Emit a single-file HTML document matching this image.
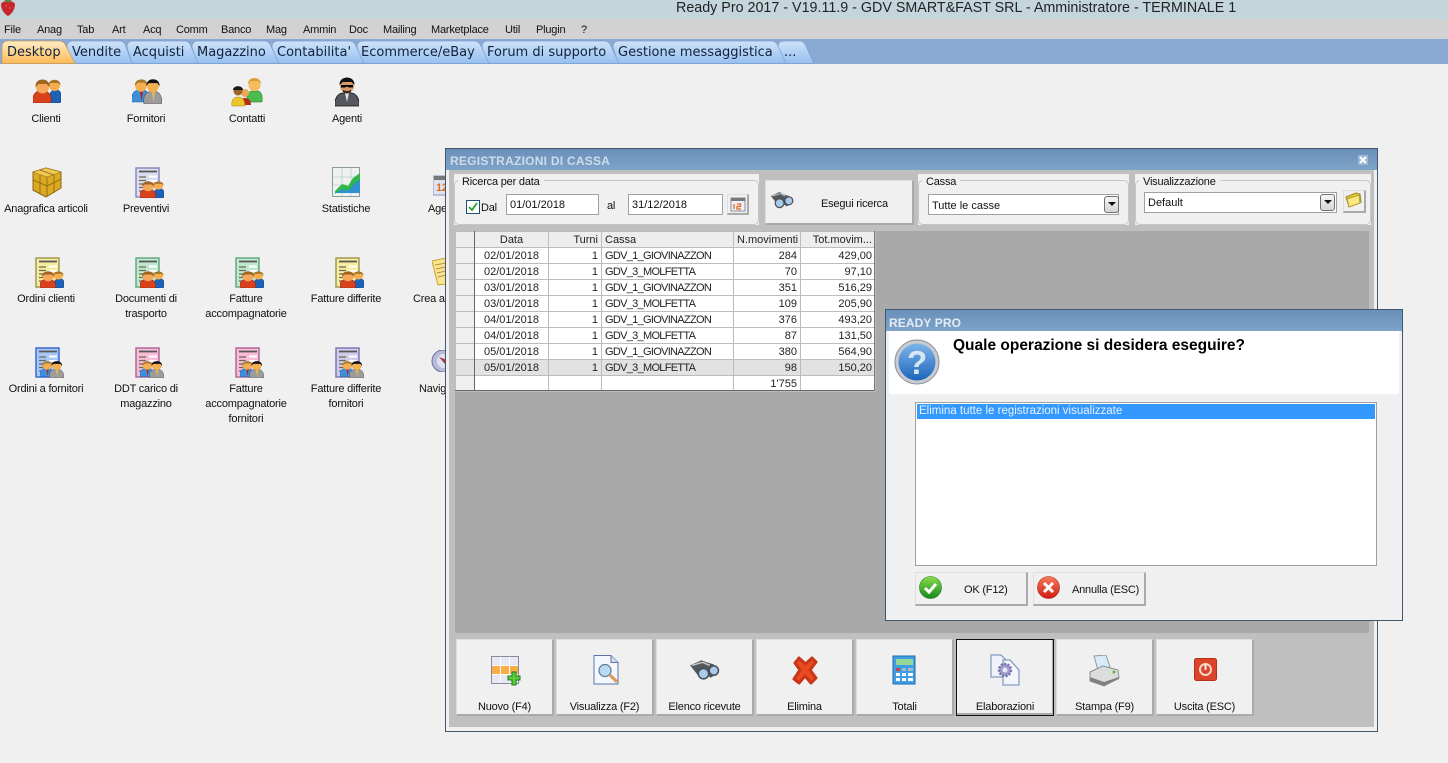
<!DOCTYPE html>
<html><head><meta charset="utf-8"><title>Ready Pro</title>
<style>
html,body{margin:0;padding:0}
body{width:1448px;height:763px;overflow:hidden;position:relative;background:#f0f0f0;font:11px "Liberation Sans",sans-serif;color:#111;letter-spacing:-.2px}
div,span,svg{position:absolute}
.t{white-space:nowrap;line-height:14px}
.c{text-align:center;width:100px;line-height:15px}
.m{top:23px;font-size:11px}
.tab{top:45px;font:13px/16px "DejaVu Sans",sans-serif;color:#10233c;white-space:nowrap;letter-spacing:0}
.grp{background:#f0f0f0;top:174px;height:51px}
.ln{border:1px solid #c6c6c6;border-radius:5px;left:0;right:0;top:6px;bottom:0}
.lg{top:0;background:#f0f0f0;padding:0 4px;left:4px;white-space:nowrap;line-height:15px;top:1px;font-size:11px;height:12px}
.inp{background:#fff;border:1px solid #a0a0a0;box-sizing:border-box;height:21px;line-height:20px;padding-left:3px;white-space:nowrap;letter-spacing:0}
.btn{background:#f0f0f0;box-sizing:border-box;border:1px solid #dedede;border-right:2px solid #aaa;border-bottom:2px solid #aaa}
.bb{top:639px;width:98px;height:77px}
.bl{left:0;right:0;top:60px;text-align:center;line-height:14px;white-space:nowrap}
.drop{width:15px;height:17px;box-sizing:border-box;background:linear-gradient(#f5f5f5,#d5d5d5);border:1px solid #707070;border-radius:3px}
.drop:after{content:"";position:absolute;left:2.500px;top:5px;border:4px solid transparent;border-top:4px solid #111;border-bottom:0}
table{position:absolute;left:455px;top:231px;width:420px;border-collapse:collapse;table-layout:fixed;background:#fff;letter-spacing:0}
td{height:15px;padding:0 3px;border:1px solid #bcbcbc;font-size:11px;line-height:14px;white-space:nowrap;overflow:hidden;color:#222}
tr td:first-child{background:#efefef;padding:0}
tr.h td{background:#ededed}
tr.s td{background:#e2e2e2}
.r{text-align:right}.ce{text-align:center}
.cs{letter-spacing:-.7px}
</style></head><body>
<svg width="0" height="0" style="left:0;top:0">
<defs>
<linearGradient id="qg" x1="0" y1="0" x2="0" y2="1"><stop offset="0" stop-color="#7db4ea"/><stop offset="1" stop-color="#1c66bb"/></linearGradient>
<linearGradient id="gg" x1="0" y1="0" x2="0" y2="1"><stop offset="0" stop-color="#8bdc4c"/><stop offset="1" stop-color="#128a1c"/></linearGradient>
<linearGradient id="rg" x1="0" y1="0" x2="0" y2="1"><stop offset="0" stop-color="#f97a5a"/><stop offset="1" stop-color="#d01c10"/></linearGradient>
<symbol id="cl" viewBox="0 0 28 24" preserveAspectRatio="none">
<path d="M17 24V15c1-3 3-4 5-4h2c2 0 3 1 4 4v8l-2 1z" fill="#1b62b8" stroke="#0e3d7a" stroke-width=".6"/>
<circle cx="21.500" cy="6.500" r="5.500" fill="#f4b050"/><path d="M15.500 6c0-7 12-7 12 0l-2.500-2h-7z" fill="#a87428"/>
<path d="M0 23c-1-5 1-9 5-11h8c4 2 6 6 5 11l-1 1H1z" fill="#d9401c" stroke="#8e2510" stroke-width=".6"/>
<circle cx="9.500" cy="8" r="6.500" fill="#f5a85c"/><path d="M2.500 8c-1-10 15-10 14 0l-3-3h-8z" fill="#a06424"/>
</symbol>
<symbol id="fo" viewBox="0 0 30 24" preserveAspectRatio="none">
<path d="M0 22c-1-6 1-10 5-11h8c3 1 4 6 4 11z" fill="#3d8fdc" stroke="#1b5ba5" stroke-width=".6"/><path d="M8 12l1.500 9 1.500-9z" fill="#b02020"/>
<circle cx="9" cy="6.500" r="5.800" fill="#f4b050"/><path d="M3 6.500c-1-8 13-8 12-1l-3-2H6z" fill="#a87830"/>
<path d="M12 24c-1-7 1-11 6-12h6c4 1 6 5 6 12z" fill="#9c9c9c" stroke="#505050" stroke-width=".6"/><path d="M20 13l1.500 9 1.500-9z" fill="#e0c050"/>
<circle cx="21" cy="7" r="5.800" fill="#f4b050"/><path d="M14.500 7c-1-9 14-9 13 0l-2-3h-9z" fill="#111"/>
</symbol>
<symbol id="doc" viewBox="0 0 30 32">
<path d="M1 1h23v29H1z" fill="var(--a)" stroke="var(--b)" stroke-width="1.500"/>
<path d="M4 10h7M4 13.500h7M4 17h5M4 20.500h5M4 24h4" stroke="#6a6a50" stroke-width="1.200"/>
<path d="M4 4.500h18" stroke="#555" stroke-width="1.800"/>
<path d="M14 8.500h8v2h-8zM14 13h8v2h-8z" fill="#fff"/>
</symbol>
</defs></svg>

<!-- title bar -->
<div style="left:0;top:0;width:1448px;height:19px;background:#c4d5dc"></div>
<svg style="left:1px;top:0" width="14" height="16" viewBox="0 0 14 16"><path d="M0 4c2-4 12-4 14 0 0 5-3 10-7 12C3 14 0 9 0 4z" fill="#c8262c"/><path d="M3 0h8l-4 3z" fill="#5d8a3a"/><circle cx="5" cy="6" r=".6" fill="#f0a080"/><circle cx="9" cy="8" r=".6" fill="#f0a080"/></svg>
<div class="t" style="left:676px;top:0;font-size:14.300px;line-height:17px;color:#222;letter-spacing:0">Ready Pro 2017 - V19.11.9 - GDV SMART&amp;FAST SRL - Amministratore - TERMINALE 1</div>

<!-- menu -->
<div style="left:0;top:19px;width:1448px;height:20px;background:#d2d2d2"></div>
<span class="t m" style="left:4px">File</span><span class="t m" style="left:37px">Anag</span><span class="t m" style="left:77px">Tab</span><span class="t m" style="left:112px">Art</span><span class="t m" style="left:143px">Acq</span><span class="t m" style="left:176px">Comm</span><span class="t m" style="left:221px">Banco</span><span class="t m" style="left:266px">Mag</span><span class="t m" style="left:303px">Ammin</span><span class="t m" style="left:349px">Doc</span><span class="t m" style="left:383px">Mailing</span><span class="t m" style="left:431px">Marketplace</span><span class="t m" style="left:505px">Util</span><span class="t m" style="left:536px">Plugin</span><span class="t m" style="left:581px">?</span>

<!-- tabs -->
<div style="left:0;top:39px;width:1448px;height:24.500px;background:#8aa9d5"></div>
<svg style="left:0;top:39px" width="820" height="25" viewBox="0 0 820 25">
<defs>
<linearGradient id="tb" x1="0" y1="0" x2="0" y2="1"><stop offset="0" stop-color="#cfe2fa"/><stop offset="1" stop-color="#96c0f0"/></linearGradient>
<linearGradient id="ta" x1="0" y1="0" x2="0" y2="1"><stop offset="0" stop-color="#ffedc6"/><stop offset="1" stop-color="#fdb955"/></linearGradient>
</defs>
<g fill="url(#tb)" stroke="#7f9fc9" stroke-width=".7">
<path d="M783 24.500L778 8Q778 2 784 2H799Q803 2 805 5L814 24.500z"/>
<path d="M618 24.500L613 8Q613 2 619 2H771Q775 2 777 5L786 24.500z"/>
<path d="M487 24.500L482 8Q482 2 488 2H604Q608 2 610 5L619 24.500z"/>
<path d="M362 24.500L357 8Q357 2 363 2H474Q478 2 480 5L489 24.500z"/>
<path d="M277 24.500L272 8Q272 2 278 2H349Q353 2 355 5L364 24.500z"/>
<path d="M197 24.500L192 8Q192 2 198 2H264Q268 2 270 5L279 24.500z"/>
<path d="M132 24.500L127 8Q127 2 133 2H184Q188 2 190 5L198 24.500z"/>
<path d="M72 24.500L67 8Q67 2 73 2H119Q123 2 125 5L132 24.500z"/>
</g>
<path d="M2 24.500V8Q2 2 8 2H59Q63 2 65 5L75 24.500z" fill="url(#ta)" stroke="#c99a50" stroke-width=".7"/>
</svg>
<span class="tab" style="left:7px">Desktop</span><span class="tab" style="left:72px">Vendite</span><span class="tab" style="left:133px">Acquisti</span><span class="tab" style="left:197px">Magazzino</span><span class="tab" style="left:277px">Contabilita'</span><span class="tab" style="left:361px">Ecommerce/eBay</span><span class="tab" style="left:487px">Forum di supporto</span><span class="tab" style="left:618px">Gestione messaggistica</span><span class="tab" style="left:784px">...</span>

<!-- desktop icons -->
<svg style="left:33px;top:79px" width="28" height="24"><use href="#cl" width="28" height="24"/></svg>
<svg style="left:132px;top:79px" width="30" height="25"><use href="#fo" width="30" height="25"/></svg>
<svg style="left:231px;top:76px" width="32" height="32" viewBox="0 0 32 32"><path d="M16 26c-1-6 1-11 5-11h6c3 0 5 5 4 11z" fill="#4cba4c" stroke="#1f7a1f" stroke-width=".5"/><circle cx="23.500" cy="9" r="6" fill="#f5bd60"/><path d="M17 8c0-8 13-8 13 0l-3-3h-7z" fill="#d8a030"/><circle cx="14" cy="17" r="4" fill="#e8a858"/><path d="M9 29c0-5 2-7 5-7s6 2 6 7z" fill="#b52a18"/><path d="M1 30c-1-5 1-9 6-9s7 4 7 9z" fill="#ecc52c" stroke="#a08010" stroke-width=".5"/><circle cx="7" cy="15" r="4.500" fill="#9c6428"/><path d="M2 14c0-5 10-5 10 0H2z" fill="#181818"/></svg>
<svg style="left:335px;top:77px" width="24" height="30" viewBox="0 0 24 30"><path d="M0 29c-1-7 3-13 8-13h8c5 0 9 6 8 13z" fill="#55585c" stroke="#111" stroke-width=".8"/><path d="M10 16l2 9 2-9z" fill="#dfe2e8"/><circle cx="12" cy="9" r="7" fill="#d89868"/><path d="M4.500 8C4-2 20-2 19.500 8l-3-3H8z" fill="#111"/><path d="M6 8h12v2.500h-4l-2-1-2 1H6z" fill="#000"/><path d="M8 13q4 2 8 0v2q-4 3-8 0z" fill="#3a2a20"/></svg>

<svg style="left:31px;top:166px" width="32" height="32" viewBox="0 0 32 32"><path d="M2 6l13-4 15 4v16l-15 9-13-7z" fill="#dcaa22" stroke="#8a6510" stroke-linejoin="round"/><path d="M2 6l14 5 14-5-15-4z" fill="#f0c850" stroke="#a07a1c" stroke-width=".6"/><path d="M16 11v20M2 14l14 6 14-7M9 4l14 5M9 9v19M23 9v18" stroke="#8a6510" fill="none" stroke-width=".8"/></svg>
<svg style="left:135px;top:167px" width="30" height="32"><use href="#doc" width="30" height="32" style="--a:#dcdcf0;--b:#8a8ab8"/><use href="#cl" x="5" y="14" width="24" height="17"/></svg>
<svg style="left:332px;top:167px" width="30" height="31" viewBox="0 0 30 31"><path d="M.5.500h27v29H.5z" fill="#eef2f0" stroke="#8d9a9a"/><path d="M1 10h26M1 18h26M10 1v28M19 1v28" stroke="#c4ccd0" stroke-width=".8"/><path d="M3 26l7-6 6 2 5-8 7-5v17H3z" fill="#2f8fd0"/><path d="M3 24l7-7 6 2 5-8 7-5v6l-7 6-5 6-6-2-7 5z" fill="#2eb84a"/></svg>
<svg style="left:433px;top:175px" width="14" height="22" viewBox="0 0 14 22"><path d="M0 1h14v19H0z" fill="#dfe4f4" stroke="#8a94b8"/><path d="M1 1h13v4H1z" fill="#777"/><text x="3" y="16" font-size="11" font-weight="700" fill="#e86a10" font-family="Liberation Sans">12</text></svg>

<svg style="left:35px;top:257px" width="30" height="32"><use href="#doc" width="30" height="32" style="--a:#f8eca0;--b:#a09a50"/><use href="#cl" x="5" y="14" width="24" height="17"/></svg>
<svg style="left:135px;top:257px" width="30" height="32"><use href="#doc" width="30" height="32" style="--a:#bfe8cf;--b:#66a884"/><use href="#cl" x="5" y="14" width="24" height="17"/></svg>
<svg style="left:235px;top:257px" width="30" height="32"><use href="#doc" width="30" height="32" style="--a:#bfe8cf;--b:#66a884"/><use href="#cl" x="5" y="14" width="24" height="17"/></svg>
<svg style="left:335px;top:257px" width="30" height="32"><use href="#doc" width="30" height="32" style="--a:#f8eca0;--b:#a09a50"/><use href="#cl" x="5" y="14" width="24" height="17"/></svg>
<svg style="left:432px;top:258px" width="14" height="28" viewBox="0 0 14 28"><path d="M0 3l14-3v26l-8 1z" fill="#fbe48c" stroke="#c8a030"/><path d="M3 7l11-2M4 11l10-2M5 15l9-2M6 19l8-2" stroke="#b09050"/></svg>

<svg style="left:35px;top:347px" width="30" height="32"><use href="#doc" width="30" height="32" style="--a:#a8c8fa;--b:#3a6cd0"/><use href="#fo" x="5" y="14" width="24" height="17"/></svg>
<svg style="left:135px;top:347px" width="30" height="32"><use href="#doc" width="30" height="32" style="--a:#f8bcd8;--b:#b06a98"/><use href="#fo" x="5" y="14" width="24" height="17"/></svg>
<svg style="left:235px;top:347px" width="30" height="32"><use href="#doc" width="30" height="32" style="--a:#f8bcd8;--b:#b06a98"/><use href="#fo" x="5" y="14" width="24" height="17"/></svg>
<svg style="left:335px;top:347px" width="30" height="32"><use href="#doc" width="30" height="32" style="--a:#d0ccec;--b:#8078b0"/><use href="#fo" x="5" y="14" width="24" height="17"/></svg>
<svg style="left:431px;top:350px" width="16" height="22" viewBox="0 0 16 22"><circle cx="12" cy="11" r="11" fill="#b8bcd8" stroke="#6a6e98"/><circle cx="13" cy="11" r="7" fill="#dfe2ee"/><path d="M8 7l8 3-2 4z" fill="#b03040"/></svg>

<span class="t c" style="left:-4px;top:112px">Clienti</span><span class="t c" style="left:96px;top:112px">Fornitori</span><span class="t c" style="left:197px;top:112px">Contatti</span><span class="t c" style="left:297px;top:112px">Agenti</span>
<span class="t c" style="left:-4px;top:202px">Anagrafica articoli</span><span class="t c" style="left:96px;top:202px">Preventivi</span><span class="t c" style="left:296px;top:202px">Statistiche</span><span class="t" style="left:428px;top:202px">Age</span>
<span class="t c" style="left:-4px;top:292px">Ordini clienti</span><span class="t c" style="left:96px;top:292px">Documenti di<br>trasporto</span><span class="t c" style="left:196px;top:292px">Fatture<br>accompagnatorie</span><span class="t c" style="left:296px;top:292px">Fatture differite</span><span class="t" style="left:413px;top:292px">Crea a</span>
<span class="t c" style="left:-4px;top:382px">Ordini a fornitori</span><span class="t c" style="left:96px;top:382px">DDT carico di<br>magazzino</span><span class="t c" style="left:196px;top:382px">Fatture<br>accompagnatorie<br>fornitori</span><span class="t c" style="left:296px;top:382px">Fatture differite<br>fornitori</span><span class="t" style="left:419px;top:382px">Navig</span>

<!-- main window -->
<div style="left:445px;top:148px;width:933px;height:584px;box-sizing:border-box;border:1px solid #44566c;background:#f0f0f0"></div>
<div style="left:446px;top:149px;width:931px;height:21px;background:linear-gradient(#6a90ba,#7ea3c9)"></div>
<div class="t" style="left:450px;top:154px;font-weight:700;font-size:12px;color:#cfdbe8;letter-spacing:.25px">REGISTRAZIONI DI CASSA</div>
<div style="left:1358px;top:155px;width:10px;height:10px;background:#9ab6d2"></div>
<svg style="left:1359px;top:156px" width="8" height="8" viewBox="0 0 8 8"><path d="M1 1l6 6M7 1L1 7" stroke="#fff" stroke-width="2"/></svg>
<div style="left:449px;top:170px;width:925px;height:557px;background:#bfbfbf"></div>

<!-- groups -->
<div class="grp" style="left:454px;width:305px"><div class="ln"></div><div class="lg">Ricerca per data</div></div>
<div style="left:466px;top:200px;width:14px;height:14px;box-sizing:border-box;border:1px solid #1f4e70;background:#fff"></div>
<svg style="left:468px;top:202px" width="10" height="10" viewBox="0 0 10 10"><path d="M1 5l3 3 5-7" fill="none" stroke="#2aa02a" stroke-width="1.800"/></svg>
<span class="t" style="left:481px;top:201px">Dal</span>
<div class="inp" style="left:506px;top:194px;width:93px">01/01/2018</div>
<span class="t" style="left:607px;top:199px">al</span>
<div class="inp" style="left:628px;top:194px;width:95px">31/12/2018</div>
<div class="btn" style="left:727px;top:194px;width:22px;height:21px"></div>
<svg style="left:730px;top:196px" width="16" height="16" viewBox="0 0 16 16"><path d="M1 2h14v13H1z" fill="#eef0fa" stroke="#8a8ca8"/><path d="M1 2h14v3H1z" fill="#777"/><path d="M4 8v5M7 8h3.500v2.500H7V13h4" fill="none" stroke="#e86a10" stroke-width="1.300"/></svg>

<div class="btn" style="left:765px;top:180px;width:149px;height:45px"></div>
<svg style="left:770px;top:191px" width="24" height="18" viewBox="0 0 30 22"><path d="M1 6l11-5 5 3 7 2 5 8-8 5-6-4-6 1z" fill="#53585e"/><path d="M3 6l10-3 6 3" fill="none" stroke="#b8bcc2" stroke-width="1.500"/><circle cx="12" cy="15" r="5.500" fill="#a8cdec" stroke="#4a4e55" stroke-width="1.500"/><circle cx="23.500" cy="12" r="5" fill="#a8cdec" stroke="#4a4e55" stroke-width="1.500"/></svg>
<span class="t" style="left:821px;top:197px">Esegui ricerca</span>

<div class="grp" style="left:918px;width:211px"><div class="ln"></div><div class="lg">Cassa</div></div>
<div class="inp" style="left:928px;top:194px;width:191px;padding-top:1px">Tutte le casse</div>
<div class="drop" style="left:1104px;top:196px"></div>
<div class="grp" style="left:1135px;width:236px"><div class="ln"></div><div class="lg">Visualizzazione</div></div>
<div class="inp" style="left:1144px;top:192px;width:193px">Default</div>
<div class="drop" style="left:1320px;top:194px"></div>
<div class="btn" style="left:1343px;top:190px;width:23px;height:23px"></div>
<svg style="left:1345px;top:192px" width="17" height="16" viewBox="0 0 17 16"><path d="M1 5l10-4 4 1 1 8-12 5z" fill="#e8c840" stroke="#a08a20"/><path d="M2 7l12-4 1 8-11 4z" fill="#fbe880" stroke="#b09a30"/></svg>

<!-- grey panel -->
<div style="left:455px;top:231px;width:914px;height:402px;background:#a9a9a9"></div>
<table>
<colgroup><col style="width:19px"><col style="width:74px"><col style="width:53px"><col style="width:132px"><col style="width:67px"><col style="width:75px"></colgroup>
<tr class="h"><td></td><td class="ce">Data</td><td class="r">Turni</td><td>Cassa</td><td class="r">N.movimenti</td><td class="r">Tot.movim...</td></tr>
<tr><td></td><td class="ce">02/01/2018</td><td class="r">1</td><td class="cs">GDV_1_GIOVINAZZON</td><td class="r">284</td><td class="r">429,00</td></tr>
<tr><td></td><td class="ce">02/01/2018</td><td class="r">1</td><td class="cs">GDV_3_MOLFETTA</td><td class="r">70</td><td class="r">97,10</td></tr>
<tr><td></td><td class="ce">03/01/2018</td><td class="r">1</td><td class="cs">GDV_1_GIOVINAZZON</td><td class="r">351</td><td class="r">516,29</td></tr>
<tr><td></td><td class="ce">03/01/2018</td><td class="r">1</td><td class="cs">GDV_3_MOLFETTA</td><td class="r">109</td><td class="r">205,90</td></tr>
<tr><td></td><td class="ce">04/01/2018</td><td class="r">1</td><td class="cs">GDV_1_GIOVINAZZON</td><td class="r">376</td><td class="r">493,20</td></tr>
<tr><td></td><td class="ce">04/01/2018</td><td class="r">1</td><td class="cs">GDV_3_MOLFETTA</td><td class="r">87</td><td class="r">131,50</td></tr>
<tr><td></td><td class="ce">05/01/2018</td><td class="r">1</td><td class="cs">GDV_1_GIOVINAZZON</td><td class="r">380</td><td class="r">564,90</td></tr>
<tr class="s"><td></td><td class="ce">05/01/2018</td><td class="r">1</td><td class="cs">GDV_3_MOLFETTA</td><td class="r">98</td><td class="r">150,20</td></tr>
<tr><td></td><td></td><td></td><td></td><td class="r">1'755</td><td></td></tr>
</table>
<div style="left:474px;top:231px;width:1px;height:160px;background:#666"></div>
<div style="left:455px;top:390px;width:420px;height:1px;background:#666"></div>
<div style="left:874px;top:231px;width:1px;height:160px;background:#777"></div>

<!-- bottom buttons -->
<div class="btn bb" style="left:456px"><div class="bl">Nuovo (F4)</div></div>
<div class="btn bb" style="left:556px"><div class="bl">Visualizza (F2)</div></div>
<div class="btn bb" style="left:656px"><div class="bl">Elenco ricevute</div></div>
<div class="btn bb" style="left:756px"><div class="bl">Elimina</div></div>
<div class="btn bb" style="left:856px"><div class="bl">Totali</div></div>
<div class="btn bb" style="left:956px;border:1px solid #111;box-shadow:inset -1px -2px #aaa"><div class="bl">Elaborazioni</div></div>
<div class="btn bb" style="left:1056px"><div class="bl">Stampa (F9)</div></div>
<div class="btn bb" style="left:1156px"><div class="bl">Uscita (ESC)</div></div>

<svg style="left:491px;top:656px" width="30" height="30" viewBox="0 0 30 30"><path d="M.5.500h27v27H.5z" fill="#e8e8f4" stroke="#8a8a9a"/><path d="M1 9.500h26v9H1z" fill="#f9ad48"/><path d="M9.500 1v26M18.500 1v26M1 9.500h26M1 18.500h26" stroke="#fff" stroke-width="1"/><path d="M21 16h4v4h4v4h-4v5h-4v-5h-4v-4h4z" fill="#5ccd3a" stroke="#1d7a1d"/></svg>
<svg style="left:593px;top:655px" width="28" height="32" viewBox="0 0 28 32"><path d="M1 .500h17l7 7V29H1z" fill="#f4f7fd" stroke="#5a74a8"/><path d="M18 .500v7h7" fill="#cfdaf0" stroke="#5a74a8"/><circle cx="12" cy="15.500" r="6" fill="#b8daf4" stroke="#5f7690" stroke-width="1.200"/><path d="M17 20l7 7" stroke="#e09a5a" stroke-width="3.200"/></svg>
<svg style="left:689px;top:659px" width="31" height="21" viewBox="0 0 30 20"><path d="M1 6l11-5 5 2 7 2 5 8-8 5-6-4-6 2z" fill="#53585e"/><path d="M3 6l10-3 7 3" fill="none" stroke="#c0c4ca" stroke-width="1.500"/><circle cx="14" cy="14" r="5" fill="#a8cdec" stroke="#4a4e55" stroke-width="1.500"/><circle cx="24" cy="11" r="4.500" fill="#a8cdec" stroke="#4a4e55" stroke-width="1.500"/></svg>
<svg style="left:791px;top:655px" width="29" height="30" viewBox="0 0 29 30"><path d="M4 8l4-5 6.500 6L21 3l4 4-6 8 6 8-5 5-6-7-6 7-5-4 6-9z" fill="#ea4a20" stroke="#c8361a" stroke-width="3" stroke-linejoin="round"/></svg>
<svg style="left:892px;top:655px" width="25" height="31" viewBox="0 0 25 31"><path d="M1 1h22v28H1z" fill="#3f9fe6" stroke="#1c6cb0"/><path d="M4 4h17v6H4z" fill="#96d896"/><path d="M4 13h4v3H4z" fill="#b84a4a"/><path d="M10 13h4v3h-4zM16 13h5v3h-5z" fill="#a8b8c8"/><path d="M4 18h4v3H4zM10 18h4v3h-4zM16 18h5v3h-5zM4 23h4v3H4zM10 23h4v3h-4zM16 23h5v3h-5z" fill="#fff"/></svg>
<svg style="left:990px;top:654px" width="31" height="32" viewBox="0 0 31 32"><path d="M1 1h10l8 8v14H1z" fill="#eef3fb" stroke="#6a86b4"/><path d="M13 6h7l9 10v15H13z" fill="#f2f6fc" stroke="#6a86b4"/><circle cx="15" cy="16" r="6" fill="#a09ad0" stroke="#7872a8" stroke-width="2.500" stroke-dasharray="2 1.400"/><circle cx="15" cy="16" r="2.500" fill="#e8e8f4"/></svg>
<svg style="left:1089px;top:655px" width="31" height="32" viewBox="0 0 31 32"><path d="M5 1l12-1 4 12-12 3z" fill="#d8ecf8" stroke="#8a9aa8"/><path d="M1 17l13-6 15 4 1 8-15 8-14-5z" fill="#dcdedc" stroke="#8e908e"/><path d="M1 22l14 5 15-5v2l-15 7-14-5z" fill="#7f827f"/><circle cx="25" cy="17" r="1.500" fill="#5abd3a"/></svg>
<svg style="left:1194px;top:658px" width="23" height="23" viewBox="0 0 23 23"><rect width="22" height="22" x=".5" y=".5" rx="2" fill="#d9442a" stroke="#b83018"/><circle cx="11.500" cy="11.500" r="5.500" fill="none" stroke="#f6d8c8" stroke-width="2"/><path d="M11.500 6v6" stroke="#f6e8e0" stroke-width="2"/></svg>

<!-- dialog -->
<div style="left:885px;top:309px;width:518px;height:312px;box-sizing:border-box;border:1px solid #3e5870;background:#f0f0f0"></div>
<div style="left:886px;top:310px;width:516px;height:21px;background:linear-gradient(#6a90ba,#7ea3c9)"></div>
<div class="t" style="left:889px;top:316px;font-weight:700;font-size:12px;color:#e4ecf4;letter-spacing:.1px">READY PRO</div>
<div style="left:889px;top:331px;width:510px;height:63px;background:#fff"></div>
<svg style="left:894px;top:339px" width="46" height="46" viewBox="0 0 46 46"><circle cx="23" cy="23" r="22" fill="#c8ccd2" stroke="#8e9298"/><circle cx="23" cy="23" r="18.500" fill="url(#qg)"/><text x="23" y="35" font-size="33" font-weight="700" text-anchor="middle" fill="#d8e6f4" font-family="Liberation Sans">?</text></svg>
<div class="t" style="left:953px;top:337px;font:700 15.500px/18px 'Liberation Sans',sans-serif;color:#000;letter-spacing:0">Quale operazione si desidera eseguire?</div>
<div style="left:915px;top:402px;width:462px;height:164px;box-sizing:border-box;border:1px solid #a0a0a0;background:#fff"></div>
<div class="t" style="left:917px;top:404px;width:458px;height:15px;background:#3399ff;color:#e8f2ff;font-size:11.500px;letter-spacing:0;padding-left:2px;box-sizing:border-box">Elimina tutte le registrazioni visualizzate</div>
<div class="btn" style="left:915px;top:572px;width:113px;height:34px"></div>
<div class="btn" style="left:1033px;top:572px;width:113px;height:34px"></div>
<svg style="left:919px;top:576px" width="23" height="23" viewBox="0 0 23 23"><circle cx="11.500" cy="11.500" r="11" fill="url(#gg)" stroke="#147a1c" stroke-width=".6"/><path d="M6 12l4 4 7-8" fill="none" stroke="#fff" stroke-width="3"/></svg>
<svg style="left:1037px;top:576px" width="23" height="23" viewBox="0 0 23 23"><circle cx="11.500" cy="11.500" r="11" fill="url(#rg)" stroke="#b01c10" stroke-width=".6"/><path d="M7 7l9 9M16 7l-9 9" stroke="#fff" stroke-width="3"/></svg>
<span class="t" style="left:964px;top:583px">OK (F12)</span>
<span class="t" style="left:1072px;top:583px">Annulla (ESC)</span>
</body></html>
